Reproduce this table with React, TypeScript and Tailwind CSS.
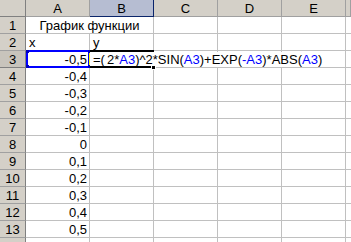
import React from "react"

const cols = ["A", "B", "C", "D", "E", ""]
const values: Record<number, string> = {
  3: "-0,5",
  4: "-0,4",
  5: "-0,3",
  6: "-0,2",
  7: "-0,1",
  8: "0",
  9: "0,1",
  10: "0,2",
  11: "0,3",
  12: "0,4",
  13: "0,5",
}

const font = { fontFamily: '"Liberation Sans", Arial, sans-serif' }

const Ref = ({ children }: { children: React.ReactNode }) => (
  <span className="text-[#0000ff]">{children}</span>
)

const App: React.FC = () => {
  const rows = Array.from({ length: 14 }, (_, i) => i + 1)

  return (
    <div className="w-[351px] h-[242px] overflow-hidden bg-white text-[13px] text-black" style={font}>
      <div className="grid grid-cols-[26px_64px_64px_64px_64px_64px_1fr] auto-rows-[17px]">
        {/* column headers */}
        <div className="bg-[#d4d0c8] border-r border-b border-[#808080]" />
        {cols.map((c, i) => (
          <div
            key={"h" + i}
            className={
              c === "B"
                ? "bg-[#b6bdd2] border-r border-b border-[#0a246a] flex items-center justify-center leading-[17px]"
                : "bg-[#d4d0c8] border-r border-b border-[#a0a0a0] flex items-center justify-center leading-[17px]"
            }
          >
            {c}
          </div>
        ))}

        {rows.map((r) => (
          <React.Fragment key={r}>
            <div
              className={
                r === 3
                  ? "bg-[#c8c4bc] border-r border-b border-[#808080] flex items-center justify-center leading-[17px]"
                  : "bg-[#d4d0c8] border-r border-b border-[#a0a0a0] border-r-[#808080] flex items-center justify-center leading-[17px]"
              }
            >
              {r < 14 ? r : ""}
            </div>

            {r === 1 ? (
              <div className="col-span-2 border-r border-b border-[#c0c0c0] text-center leading-[17px]">
                График функции
              </div>
            ) : (
              <>
                <div className="relative border-r border-b border-[#c0c0c0] leading-[17px] text-right pr-[2px] whitespace-nowrap">
                  {r === 2 ? <span className="float-left pl-[3px]">x</span> : values[r]}
                  {r === 3 && (
                    <>
                      <div className="absolute left-0 top-[-1px] right-[-1px] bottom-[-1px] border-2 border-[#0000ff] pointer-events-none" />
                      <div className="absolute left-0 top-[-1px] w-[3px] h-[3px] bg-[#0000c0]" />
                      <div className="absolute left-0 bottom-[-1px] w-[3px] h-[3px] bg-[#0000c0]" />
                      <div className="absolute right-[-2px] top-[-1px] w-[3px] h-[3px] bg-[#0000c0]" />
                      <div className="absolute right-[-2px] bottom-[-1px] w-[3px] h-[3px] bg-[#0000c0]" />
                      <div className="absolute right-[-2px] top-[2px] bottom-[2px] w-[2px] bg-[#ffff00]" />
                    </>
                  )}
                </div>
                <div className="relative border-r border-b border-[#c0c0c0] leading-[17px] whitespace-nowrap">
                  {r === 2 && <span className="pl-[3px]">y</span>}
                  {r === 3 && (
                    <>
                      <div className="absolute left-0 top-[1px] bottom-0 w-[230px] bg-white z-10 leading-[16px] pl-[3px] flex items-center">
                        <span>=(</span>
                        <span className="inline-block w-px h-[13px] bg-black mx-px" />
                        <span>
                          2*<Ref>A3</Ref>)^2*SIN(<Ref>A3</Ref>)+EXP(<Ref>-A3</Ref>)*ABS(<Ref>A3</Ref>)
                        </span>
                      </div>
                      <div className="absolute left-0 right-[-1px] top-[-1px] h-[2px] bg-black z-20" />
                      <div className="absolute left-0 right-[-1px] bottom-[-1px] h-[2px] bg-black z-20" />
                      <div className="absolute right-[-3px] bottom-[-3px] w-[5px] h-[5px] bg-black border border-white z-30" />
                    </>
                  )}
                </div>
              </>
            )}

            <div className="border-r border-b border-[#c0c0c0]" />
            <div className="border-r border-b border-[#c0c0c0]" />
            <div className="border-r border-b border-[#c0c0c0]" />
            <div className="border-b border-[#c0c0c0]" />
          </React.Fragment>
        ))}
      </div>
    </div>
  )
}

export default App
